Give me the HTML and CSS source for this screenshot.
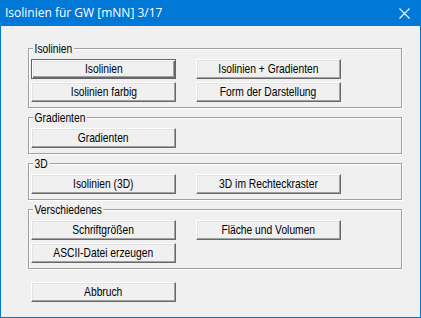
FILE: index.html
```html
<!DOCTYPE html>
<html>
<head>
<meta charset="utf-8">
<link rel="stylesheet" href="styles.css">
</head>
<body>
<div class="window">
  <div class="titlebar">
    <span class="title">Isolinien für GW [mNN] 3/17</span>
    <svg class="close" width="11" height="11" viewBox="0 0 11 11"><path d="M0.5 0.5 L10.5 10.5 M10.5 0.5 L0.5 10.5" stroke="#fff" stroke-width="1.1" fill="none"/></svg>
  </div>
  <div class="client">
    <div class="group">
      <span class="legend"><span class="nt">Isolinien</span></span>
      <div class="grid">
        <button class="btn default"><span class="nt">Isolinien</span></button>
        <button class="btn"><span class="nt">Isolinien + Gradienten</span></button>
        <button class="btn"><span class="nt">Isolinien farbig</span></button>
        <button class="btn"><span class="nt">Form der Darstellung</span></button>
      </div>
    </div>
    <div class="group">
      <span class="legend"><span class="nt">Gradienten</span></span>
      <div class="grid">
        <button class="btn"><span class="nt">Gradienten</span></button>
      </div>
    </div>
    <div class="group">
      <span class="legend"><span class="nt">3D</span></span>
      <div class="grid">
        <button class="btn"><span class="nt">Isolinien (3D)</span></button>
        <button class="btn"><span class="nt">3D im Rechteckraster</span></button>
      </div>
    </div>
    <div class="group">
      <span class="legend"><span class="nt">Verschiedenes</span></span>
      <div class="grid">
        <button class="btn"><span class="nt">Schriftgrößen</span></button>
        <button class="btn"><span class="nt">Fläche und Volumen</span></button>
        <button class="btn"><span class="nt">ASCII-Datei erzeugen</span></button>
      </div>
    </div>
    <div class="bottom">
      <button class="btn"><span class="nt">Abbruch</span></button>
    </div>
  </div>
</div>
</body>
</html>
```

FILE: styles.css
```css
html, body {
  margin: 0;
  padding: 0;
  background: #f0f0f0;
}
.window {
  box-sizing: border-box;
  width: 421px;
  height: 318px;
  border: 1px solid #0078d7;
  border-top: none;
  background: #f0f0f0;
  display: flex;
  flex-direction: column;
}
.titlebar {
  height: 26px;
  margin: 0 -1px;
  background: #0078d7;
  display: flex;
  align-items: center;
  justify-content: space-between;
  padding: 0 11px 0 5px;
  box-sizing: border-box;
  flex: none;
}
.title {
  color: #fff;
  font-family: "Open Sans", "Noto Sans", sans-serif;
  font-size: 12px;
  line-height: 16px;
  padding-bottom: 1px;
}
.close {
  display: block;
}
.client {
  flex: 1;
  padding: 22px 18px 0 27px;
  font-family: "Liberation Sans", Arial, sans-serif;
  font-size: 13px;
  color: #000;
}
.nt {
  display: inline-block;
  white-space: nowrap;
  transform: scaleX(0.79);
}
.group {
  position: relative;
  border: 1px solid #a0a0a0;
  box-shadow: 1px 1px 0 #fff, inset 1px 1px 0 #fff;
  padding: 10px 2px 5px 2px;
  margin-bottom: 9px;
}
.legend {
  position: absolute;
  top: -8px;
  left: 4px;
  line-height: 15px;
  display: flex;
}
.legend .nt {
  transform-origin: left center;
  background: #f0f0f0;
  padding: 0 2px;
}
.grid {
  display: grid;
  grid-template-columns: 145px 145px;
  column-gap: 20px;
  row-gap: 3px;
}
.btn {
  box-sizing: border-box;
  width: 145px;
  height: 20px;
  margin: 0;
  padding: 0 0 1px 0;
  background: #f0f0f0;
  font-family: inherit;
  font-size: 13px;
  color: #000;
  border: 1px solid;
  border-color: #fff #696969 #696969 #fff;
  box-shadow: inset -1px -1px 0 #a0a0a0, inset 1px 1px 0 #e3e3e3;
  border-radius: 0;
  outline: none;
  display: flex;
  align-items: center;
  justify-content: center;
}
.btn.default {
  border-color: #646464;
  box-shadow: inset 1px 1px 0 #fff, inset -1px -1px 0 #696969, inset -2px -2px 0 #a0a0a0, inset 2px 2px 0 #e3e3e3;
}
.bottom {
  padding: 4px 0 0 3px;
}
```
